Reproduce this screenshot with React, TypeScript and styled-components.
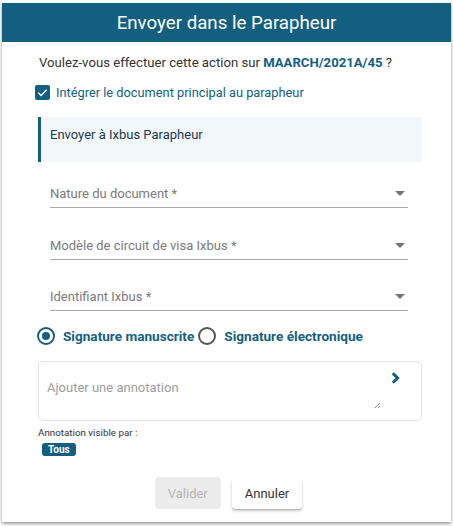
import React from "react";
import styled, { createGlobalStyle } from "styled-components";

const PRIMARY = "#135f7f";

const Global = createGlobalStyle`
  html, body { margin: 0; padding: 0; background: #fff; }
  body { font-family: Roboto, "Liberation Sans", Arial, sans-serif; }
  * { box-sizing: border-box; }
`;

const Page = styled.div`
  padding: 3px 2px 0 2px;
  width: 453px;
  height: 526px;
`;

const Dialog = styled.div`
  width: 449px;
  height: 519px;
  background: #fff;
  box-shadow: 0 2px 4px rgba(0, 0, 0, 0.3), 0 1px 2px rgba(0, 0, 0, 0.2);
  display: flex;
  flex-direction: column;
`;

const Header = styled.div`
  height: 39px;
  background: ${PRIMARY};
  color: #fff;
  font-size: 18.7px;
  display: flex;
  align-items: center;
  justify-content: center;
`;

const Body = styled.div`
  padding: 0 29px 0 35px;
  display: flex;
  flex-direction: column;
  flex: 1;
`;

const Question = styled.div`
  margin-top: 12px;
  height: 18px;
  line-height: 18px;
  font-size: 13.15px;
  color: #333;
  padding-left: 2px;
  b { color: ${PRIMARY}; font-weight: 700; }
`;

const CheckRow = styled.label`
  margin-top: 12px;
  display: flex;
  align-items: center;
  gap: 6px;
  height: 16px;
  font-size: 12.8px;
  color: ${PRIMARY};
`;

const CheckBox = styled.span`
  width: 15px;
  height: 15px;
  border-radius: 2px;
  background: ${PRIMARY};
  display: flex;
  align-items: center;
  justify-content: center;
  margin-left: -2px;
`;

const InfoBox = styled.div`
  margin-top: 17px;
  margin-left: 1px;
  height: 45px;
  background: #f2f7fa;
  border-left: 3px solid ${PRIMARY};
  padding: 10px 0 0 9px;
  font-size: 13px;
  line-height: 16px;
  color: #1c3a4a;
`;

const Field = styled.div<{ $top: number }>`
  margin: ${(p) => p.$top}px 14px 0 13px;
  height: 27px;
  display: flex;
  align-items: center;
  justify-content: space-between;
  border-bottom: 1px solid #a9a9a9;
  font-size: 13px;
  color: #7a7a7a;
  padding-bottom: 2px;
`;

const Arrow = styled.span`
  width: 0;
  height: 0;
  border-left: 5px solid transparent;
  border-right: 5px solid transparent;
  border-top: 5px solid #757575;
  margin-right: 3px;
`;

const RadioRow = styled.div`
  margin-top: 16px;
  display: flex;
  align-items: center;
  height: 18px;
`;

const RadioCircle = styled.span<{ $checked?: boolean }>`
  width: 18px;
  height: 18px;
  border-radius: 50%;
  border: 2px solid ${(p) => (p.$checked ? PRIMARY : "#555")};
  display: flex;
  align-items: center;
  justify-content: center;
  &::after {
    content: "";
    width: 8px;
    height: 8px;
    border-radius: 50%;
    background: ${(p) => (p.$checked ? PRIMARY : "transparent")};
  }
`;

const RadioLabel = styled.span`
  font-size: 13.6px;
  font-weight: 700;
  color: ${PRIMARY};
  margin: 0 4px 0 8px;
`;

const Annotation = styled.div`
  margin-top: 16px;
  margin-left: 1px;
  height: 60px;
  border: 1px solid #e3e3e3;
  border-radius: 5px;
  display: flex;
`;

const Placeholder = styled.div`
  flex: 1;
  padding: 18px 0 0 8px;
  font-size: 13px;
  color: #9e9e9e;
  position: relative;
`;

const Resize = styled.span`
  position: absolute;
  right: 2px;
  bottom: 11px;
  display: flex;
`;

const SendBtn = styled.div`
  display: flex;
  padding: 10px 21px 0 8px;
`;

const VisibleLabel = styled.div`
  margin-top: 6px;
  margin-left: 1px;
  font-size: 9.8px;
  color: #333;
`;

const Chip = styled.span`
  margin-top: 5px;
  margin-left: 5px;
  align-self: flex-start;
  background: ${PRIMARY};
  color: #fff;
  font-size: 10px;
  font-weight: 700;
  padding: 0 6px;
  height: 13px;
  line-height: 13px;
  border-radius: 3px;
`;

const Actions = styled.div`
  margin-top: 21px;
  display: flex;
  justify-content: center;
  gap: 11px;
  padding-right: 2px;
`;

const Button = styled.button<{ $disabled?: boolean }>`
  height: 32px;
  border: none;
  border-radius: 4px;
  font-family: Roboto, "Liberation Sans", Arial, sans-serif;
  font-size: 13px;
  padding: 0 13px;
  min-width: 66px;
  background: ${(p) => (p.$disabled ? "#ececec" : "#fff")};
  color: ${(p) => (p.$disabled ? "#b5b5b5" : "#333")};
  box-shadow: ${(p) =>
    p.$disabled
      ? "none"
      : "0 2px 3px rgba(0,0,0,0.2), 0 1px 1px rgba(0,0,0,0.14)"};
`;

export default function App() {
  return (
    <>
      <Global />
      <Page>
        <Dialog>
          <Header>Envoyer dans le Parapheur</Header>
          <Body>
            <Question>
              Voulez-vous effectuer cette action sur <b>MAARCH/2021A/45</b> ?
            </Question>
            <CheckRow>
              <CheckBox>
                <svg width="11" height="11" viewBox="0 0 24 24">
                  <path d="M3 12.5l6 6L21 6" fill="none" stroke="#fff" strokeWidth="3" />
                </svg>
              </CheckBox>
              Intégrer le document principal au parapheur
            </CheckRow>
            <InfoBox>Envoyer à Ixbus Parapheur</InfoBox>
            <Field $top={19}>
              Nature du document *<Arrow />
            </Field>
            <Field $top={25}>
              Modèle de circuit de visa Ixbus *<Arrow />
            </Field>
            <Field $top={24}>
              Identifiant Ixbus *<Arrow />
            </Field>
            <RadioRow>
              <RadioCircle $checked />
              <RadioLabel>Signature manuscrite</RadioLabel>
              <RadioCircle />
              <RadioLabel>Signature électronique</RadioLabel>
            </RadioRow>
            <Annotation>
              <Placeholder>
                Ajouter une annotation
                <Resize>
                  <svg width="7" height="7" viewBox="0 0 7 7">
                    <path d="M1 6L6 1M4 6L6 4" stroke="#888" strokeWidth="1" />
                  </svg>
                </Resize>
              </Placeholder>
              <SendBtn>
                <svg width="9" height="12" viewBox="0 0 9 12">
                  <path d="M1.8 1.2L6.6 6L1.8 10.8" fill="none" stroke={PRIMARY} strokeWidth="3" />
                </svg>
              </SendBtn>
            </Annotation>
            <VisibleLabel>Annotation visible par :</VisibleLabel>
            <Chip>Tous</Chip>
            <Actions>
              <Button $disabled>Valider</Button>
              <Button>Annuler</Button>
            </Actions>
          </Body>
        </Dialog>
      </Page>
    </>
  );
}
